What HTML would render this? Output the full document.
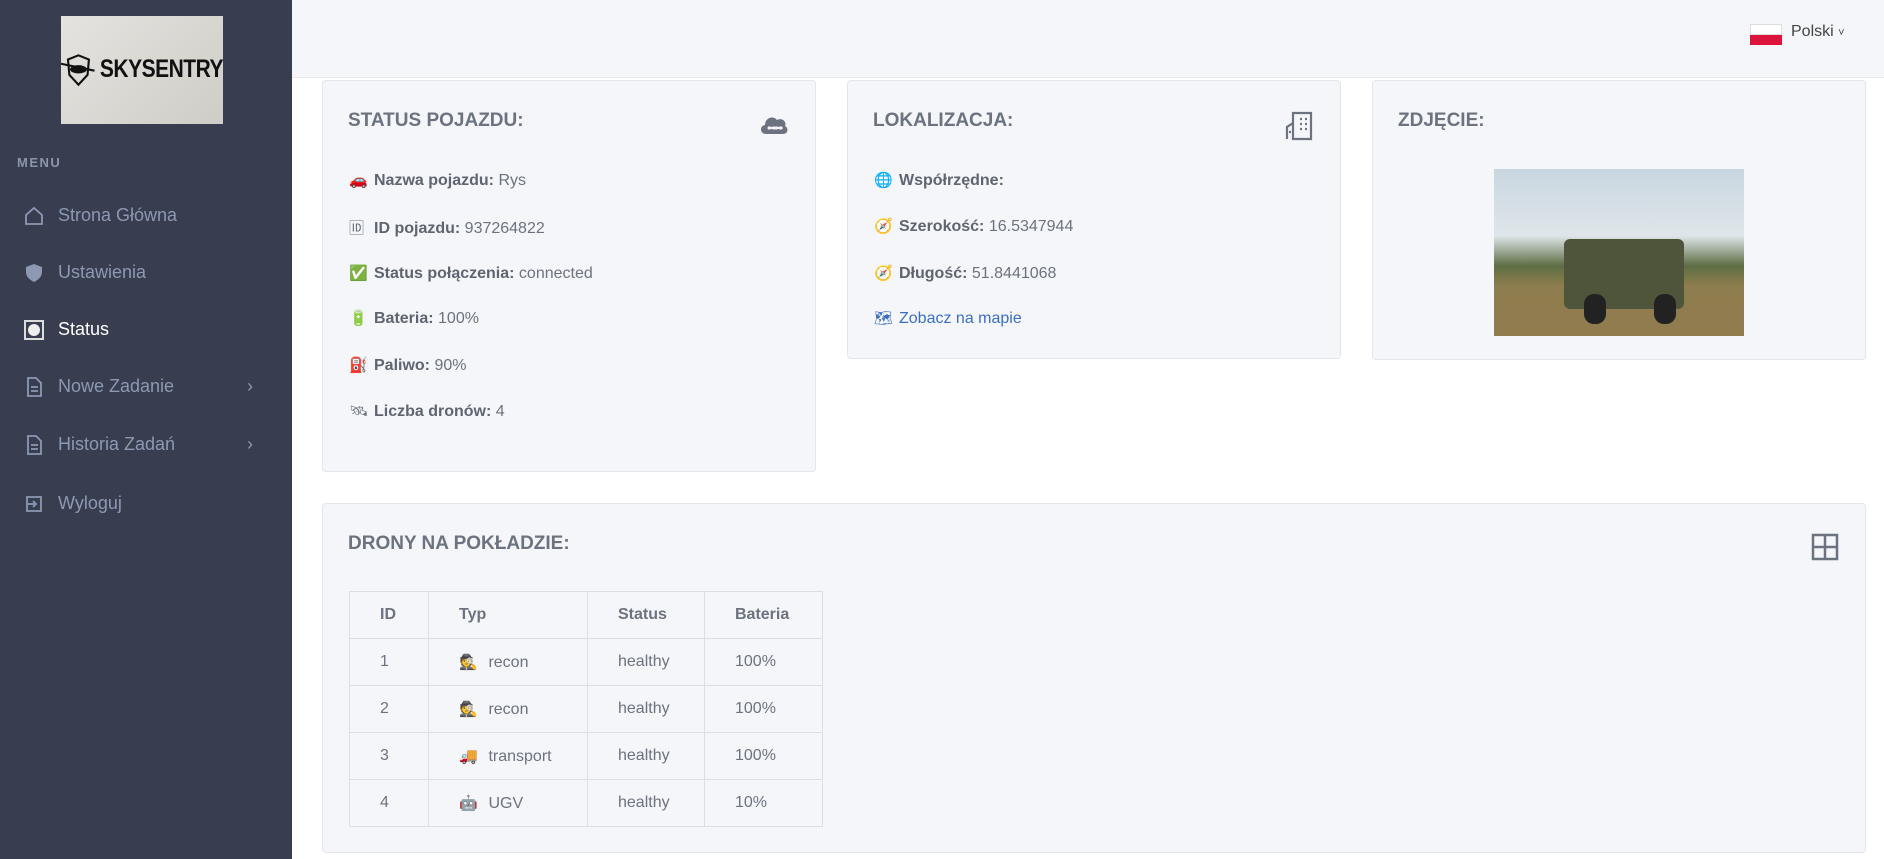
<!DOCTYPE html>
<html><head><meta charset="utf-8"><style>
*{box-sizing:border-box;margin:0;padding:0}
body{width:1884px;height:859px;overflow:hidden;background:#fff;font-family:"Liberation Sans","Noto Sans CJK SC",sans-serif;color:#6c727f;position:relative}
.sb{position:absolute;left:0;top:0;width:292px;height:859px;background:#383e50}
.logo{position:absolute;left:61px;top:16px;width:162px;height:108px;background:linear-gradient(135deg,#e4e3df,#cfcdc7);display:flex;align-items:center;justify-content:center;gap:4px}
.logo b{font-family:"Liberation Sans",sans-serif;font-weight:bold;font-size:21px;color:#111;letter-spacing:-0.5px;transform:scaleY(1.2)}
.menu{position:absolute;left:17px;top:155px;font-size:13px;font-weight:bold;letter-spacing:1.5px;color:#8b95ab}
.mi{position:absolute;left:24px;font-size:18px;color:#8d98b3;display:flex;align-items:center}
.mi svg{width:20px;height:20px;margin-right:14px}
.mi.act{color:#fff}
.chev{position:absolute;left:247px;font-size:18px;color:#8d98b3}
.hdr{position:absolute;left:292px;top:0;right:0;height:78px;background:#f5f6fa;border-bottom:1px solid #e6e8ee}
.card{position:absolute;background:#f5f6fa;border:1px solid #e4e6eb;border-radius:4px}
.t{position:absolute;left:25px;top:29px;font-size:19px;font-weight:bold;color:#6c727f}
.ln{position:absolute;left:26px;font-size:16px;white-space:nowrap}
.ln b{color:#5f6570}
.e{display:inline-block;width:25px;font-size:15px}
table{position:absolute;left:26px;top:87px;border-collapse:collapse;font-size:16px}
td,th{border:1px solid #dcdee3;height:47px;padding-left:30px;text-align:left}
th{font-weight:bold;color:#6c727f}
</style></head><body>
<div class="sb">
<div class="logo"><svg width="50" height="50" viewBox="0 0 50 50"><path d="M10 10 L25 4 L40 10 L38 32 L25 46 L12 32 Z" fill="none" stroke="#111" stroke-width="3"/><ellipse cx="25" cy="24" rx="12" ry="6" fill="#111"/><path d="M0 16 L48 26" stroke="#111" stroke-width="3"/></svg><b>SKYSENTRY</b></div>
<div class="menu">MENU</div>
<div class="mi" style="top:205px"><svg viewBox="0 0 20 20"><path d="M2 9 L10 2 L18 9 V18 H2 Z" fill="none" stroke="#8d98b3" stroke-width="1.8"/></svg>Strona Główna</div>
<div class="mi" style="top:262px"><svg viewBox="0 0 20 20"><path d="M10 1 L18 4 V9 C18 14 14 17 10 19 C6 17 2 14 2 9 V4 Z" fill="#8d98b3"/></svg>Ustawienia</div>
<div class="mi act" style="top:319px"><svg viewBox="0 0 20 20"><rect x="1" y="1" width="18" height="18" fill="none" stroke="#ddd" stroke-width="2"/><circle cx="10" cy="10" r="6" fill="#eee"/></svg>Status</div>
<div class="mi" style="top:376px"><svg viewBox="0 0 20 20"><path d="M4 1 H12 L17 6 V19 H4 Z M7 10 H14 M7 14 H14" fill="none" stroke="#8d98b3" stroke-width="1.8"/></svg>Nowe Zadanie</div>
<div class="chev" style="top:376px">›</div>
<div class="mi" style="top:434px"><svg viewBox="0 0 20 20"><path d="M4 1 H12 L17 6 V19 H4 Z M7 10 H14 M7 14 H14" fill="none" stroke="#8d98b3" stroke-width="1.8"/></svg>Historia Zadań</div>
<div class="chev" style="top:434px">›</div>
<div class="mi" style="top:493px"><svg viewBox="0 0 20 20"><path d="M3 3 H17 V17 H3 Z M3 10 H12 M9 7 L12 10 L9 13" fill="none" stroke="#8d98b3" stroke-width="1.8"/></svg>Wyloguj</div>
</div>
<div class="hdr">
<div style="position:absolute;left:1458px;top:24px;width:32px;height:21px"><div style="height:50%;background:#fff;border:1px solid #ddd"></div><div style="height:50%;background:#dc143c"></div></div>
<div style="position:absolute;left:1499px;top:23px;font-size:16px;color:#444">Polski <span style="font-size:11px">˅</span></div>
</div>
<div class="card" style="left:322px;top:80px;width:494px;height:392px">
<div class="t">STATUS POJAZDU:</div>
<svg style="position:absolute;left:436px;top:32px" width="30" height="22" viewBox="0 0 30 22"><path d="M7 21 C1 21 0 13 6 12 C6 5 14 2 18 7 C23 4 28 9 26 13 C30 15 29 21 24 21 Z" fill="#6c727f"/><path d="M9 15 C11 12 14 18 16 15 C18 12 21 18 23 15 C21 12 18 18 16 15 C14 12 11 18 9 15" stroke="#f5f6fa" stroke-width="1.6" fill="none"/></svg>
<div class="ln" style="top:90px"><span class="e">🚗</span><b>Nazwa pojazdu:</b> Rys</div>
<div class="ln" style="top:136px"><span class="e">🆔</span><b>ID pojazdu:</b> 937264822</div>
<div class="ln" style="top:183px"><span class="e">✅</span><b>Status połączenia:</b> connected</div>
<div class="ln" style="top:228px"><span class="e">🔋</span><b>Bateria:</b> 100%</div>
<div class="ln" style="top:275px"><span class="e">⛽</span><b>Paliwo:</b> 90%</div>
<div class="ln" style="top:321px"><span class="e">🛰</span><b>Liczba dronów:</b> 4</div>
</div>
<div class="card" style="left:847px;top:80px;width:494px;height:279px">
<div class="t">LOKALIZACJA:</div>
<svg style="position:absolute;left:437px;top:30px" width="28" height="30" viewBox="0 0 28 30"><path d="M2 28 V16 L8 12 V28 M8 28 V2 H26 V28 Z" fill="none" stroke="#6c727f" stroke-width="2.2"/><path d="M15 8h2M20 8h2M15 13h2M20 13h2M15 18h2M20 18h2M4 21h2" stroke="#6c727f" stroke-width="2.2"/></svg>
<div class="ln" style="top:90px"><span class="e">🌐</span><b>Współrzędne:</b></div>
<div class="ln" style="top:136px"><span class="e">🧭</span><b>Szerokość:</b> 16.5347944</div>
<div class="ln" style="top:183px"><span class="e">🧭</span><b>Długość:</b> 51.8441068</div>
<div class="ln" style="top:228px;color:#3b6fc4"><span class="e">🗺</span>Zobacz na mapie</div>
</div>
<div class="card" style="left:1372px;top:80px;width:494px;height:280px">
<div class="t">ZDJĘCIE:</div>
<div style="position:absolute;left:121px;top:88px;width:250px;height:167px;background:linear-gradient(#c9d6e0 0%,#dfe6ea 40%,#5e6e44 58%,#8e7d4e 70%,#917c4e 100%)">
<div style="position:absolute;left:70px;top:70px;width:120px;height:70px;background:#4e553a;border-radius:6px"></div>
<div style="position:absolute;left:90px;top:125px;width:22px;height:30px;background:#222;border-radius:10px"></div>
<div style="position:absolute;left:160px;top:125px;width:22px;height:30px;background:#222;border-radius:10px"></div>
</div>
</div>
<div class="card" style="left:322px;top:503px;width:1544px;height:350px">
<div class="t">DRONY NA POKŁADZIE:</div>
<svg style="position:absolute;left:1488px;top:29px" width="28" height="28" viewBox="0 0 28 28"><path d="M2 2H26V26H2Z M14 2V26 M2 14H26" fill="none" stroke="#6c727f" stroke-width="2.5"/></svg>
<table>
<tr><th style="width:79px;padding-left:30px">ID</th><th style="width:159px">Typ</th><th style="width:117px">Status</th><th style="width:118px">Bateria</th></tr>
<tr><td>1</td><td><span class="e">🕵</span> recon</td><td>healthy</td><td>100%</td></tr>
<tr><td>2</td><td><span class="e">🕵</span> recon</td><td>healthy</td><td>100%</td></tr>
<tr><td>3</td><td><span class="e">🚚</span> transport</td><td>healthy</td><td>100%</td></tr>
<tr><td>4</td><td><span class="e">🤖</span> UGV</td><td>healthy</td><td>10%</td></tr>
</table>
</div>
</body></html>
